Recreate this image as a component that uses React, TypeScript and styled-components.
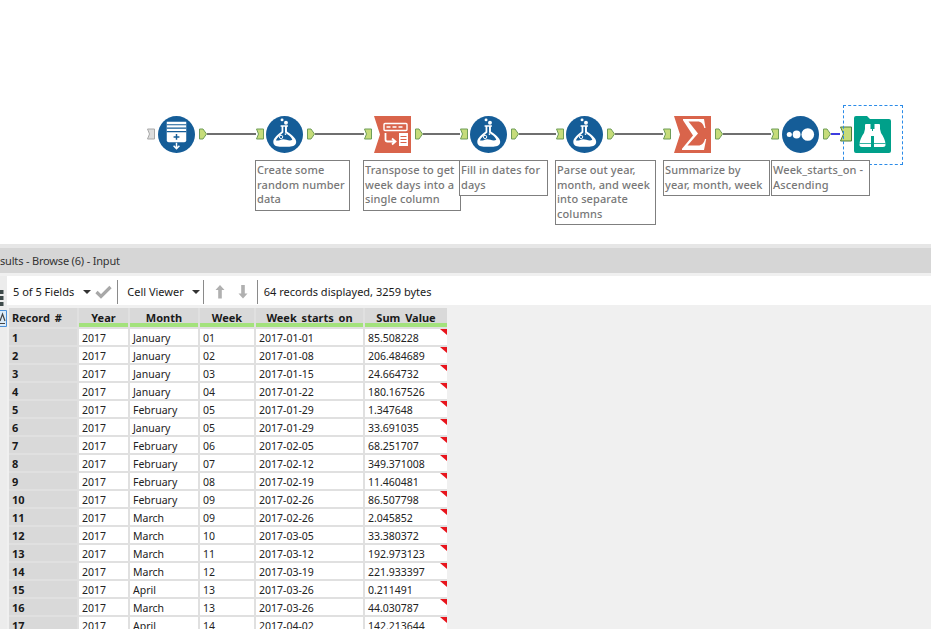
import React from "react";
import styled, { createGlobalStyle } from "styled-components";

const Global = createGlobalStyle`
  html, body { margin: 0; padding: 0; background: #fff; }
  body { font-family: "Noto Sans", "Open Sans", sans-serif; overflow: hidden; }
`;

const Page = styled.div`
  width: 931px;
  height: 629px;
  display: flex;
  flex-direction: column;
  overflow: hidden;
`;

const Canvas = styled.section`
  position: relative;
  height: 244px;
  flex: none;
  box-sizing: border-box;
  padding: 116px 0 0 147px;
  background: #fff;
`;

const FlowRow = styled.div`
  display: flex;
  align-items: flex-start;
  height: 37px;
`;

const NodeSvg = styled.svg<{ $gap?: number }>`
  display: block;
  flex: none;
  margin-left: ${(p) => p.$gap ?? 0}px;
`;

const AnchorSvg = styled.svg<{ $gap?: number; $top?: number }>`
  display: block;
  flex: none;
  margin-left: ${(p) => p.$gap ?? 0}px;
  margin-top: ${(p) => p.$top ?? 12}px;
`;

const Wire = styled.div<{ $w: number; $blue?: boolean }>`
  flex: none;
  margin-top: 17px;
  width: ${(p) => p.$w}px;
  height: 2px;
  background: ${(p) => (p.$blue ? "#3d3de0" : "#6f6f6f")};
`;

const Note = styled.div<{ $x: number; $w: number; $h: number }>`
  position: absolute;
  left: ${(p) => p.$x}px;
  top: 160px;
  width: ${(p) => p.$w}px;
  height: ${(p) => p.$h}px;
  box-sizing: border-box;
  border: 1px solid #7f7f7f;
  border-right-width: 1.5px;
  border-bottom-width: 1.5px;
  background: #fff;
  padding: 2px 1px 0 1px;
  font-size: 11px;
  font-weight: 500;
  line-height: 14.5px;
  letter-spacing: 0.1px;
  color: #777;
`;

const Selection = styled.div`
  position: absolute;
  left: 843px;
  top: 105px;
  width: 60px;
  height: 60px;
  box-sizing: border-box;
  border: 1px dashed #2b8be8;
`;

const Results = styled.section`
  flex: 1;
  min-height: 0;
  display: flex;
  flex-direction: column;
  background: #f0f0f0;
  border-top: 4px solid #e6e6e6;
`;

const TitleBar = styled.div`
  height: 25px;
  flex: none;
  background: #d6d6d6;
  display: flex;
  align-items: center;
  overflow: hidden;
`;

const Title = styled.span`
  font-size: 11px;
  letter-spacing: -0.18px;
  color: #333;
  white-space: nowrap;
`;

const Body = styled.div`
  flex: 1;
  min-height: 0;
  margin-top: 3px;
  display: flex;
`;

const SideStrip = styled.div`
  width: 7px;
  flex: none;
  background: #ececec;
  display: flex;
  flex-direction: column;
  align-items: flex-start;
  padding-top: 14px;
  gap: 4px;
`;

const Main = styled.div`
  flex: 1;
  min-width: 0;
  display: flex;
  flex-direction: column;
`;

const Toolbar = styled.div`
  height: 29px;
  flex: none;
  box-sizing: border-box;
  padding-top: 2px;
  background: #fff;
  display: flex;
  align-items: center;
  font-size: 11px;
  color: #1a1a1a;
  white-space: nowrap;
`;

const ToolText = styled.span<{ $left: number }>`
  margin-left: ${(p) => p.$left}px;
`;

const Caret = styled.span<{ $left: number }>`
  margin-left: ${(p) => p.$left}px;
  width: 0;
  height: 0;
  border-left: 4px solid transparent;
  border-right: 4px solid transparent;
  border-top: 4px solid #333;
`;

const Divider = styled.span<{ $left: number }>`
  margin-left: ${(p) => p.$left}px;
  width: 1px;
  height: 24px;
  background: #8a8a8a;
`;

const ToolIcon = styled.svg<{ $left: number }>`
  margin-left: ${(p) => p.$left}px;
  display: block;
  flex: none;
`;

const TableGrid = styled.div`
  margin: 3px 0 0 2px;
  display: grid;
  grid-template-columns: 68px 49px 68px 54px 107px 82px;
  grid-template-rows: 19px;
  grid-auto-rows: 16px;
  gap: 2px;
  width: max-content;
  background: #e0e0e0;
`;

const HeadCell = styled.div<{ $plain?: boolean }>`
  height: 19px;
  box-sizing: border-box;
  background: #d9d9d9;
  border-bottom: ${(p) => (p.$plain ? "0" : "4px solid #a3e27c")};
  font-size: 11px;
  font-weight: 700;
  color: #1a1a1a;
  line-height: 19px;
  word-spacing: 2px;
  padding-left: ${(p) => (p.$plain ? "3px" : "0")};
  text-align: ${(p) => (p.$plain ? "left" : "center")};
  white-space: nowrap;
`;

const RecordCell = styled.div`
  background: #d9d9d9;
  font-size: 11px;
  font-weight: 700;
  color: #1a1a1a;
  line-height: 17px;
  padding-left: 3px;
`;

const DataCell = styled.div<{ $flag?: boolean }>`
  position: relative;
  background: #fff;
  font-size: 10.5px;
  color: #222;
  line-height: 18px;
  padding-left: 3px;
  white-space: nowrap;
  overflow: hidden;
  &::after {
    content: "";
    display: ${(p) => (p.$flag ? "block" : "none")};
    position: absolute;
    top: 0;
    right: 0;
    border-top: 6px solid #e8141c;
    border-left: 7px solid transparent;
  }
`;

const rows: [string, string, string, string, string][] = [
  ["2017", "January", "01", "2017-01-01", "85.508228"],
  ["2017", "January", "02", "2017-01-08", "206.484689"],
  ["2017", "January", "03", "2017-01-15", "24.664732"],
  ["2017", "January", "04", "2017-01-22", "180.167526"],
  ["2017", "February", "05", "2017-01-29", "1.347648"],
  ["2017", "January", "05", "2017-01-29", "33.691035"],
  ["2017", "February", "06", "2017-02-05", "68.251707"],
  ["2017", "February", "07", "2017-02-12", "349.371008"],
  ["2017", "February", "08", "2017-02-19", "11.460481"],
  ["2017", "February", "09", "2017-02-26", "86.507798"],
  ["2017", "March", "09", "2017-02-26", "2.045852"],
  ["2017", "March", "10", "2017-03-05", "33.380372"],
  ["2017", "March", "11", "2017-03-12", "192.973123"],
  ["2017", "March", "12", "2017-03-19", "221.933397"],
  ["2017", "April", "13", "2017-03-26", "0.211491"],
  ["2017", "March", "13", "2017-03-26", "44.030787"],
  ["2017", "April", "14", "2017-04-02", "142.213644"],
];

const BLUE = "#155d98";
const RED = "#d9644b";
const TEAL = "#00a08a";

const Flask = ({ gap }: { gap: number }) => (
  <NodeSvg $gap={gap} width={37} height={37} viewBox="0 0 38 38">
    <circle cx="19" cy="19" r="19" fill={BLUE} />
    <circle cx="16.500" cy="4" r="1.500" fill="#fff" />
    <circle cx="20.500" cy="7" r="2" fill="#fff" />
    <g transform="translate(0 -1.500)">
      <path
        d="M15 11h7.500v1.500h-1v5C25 20 31 24 31 28c0 3.500-3 5-7 5H14c-4 0-6.500-1.500-6.500-5 0-4 5.500-8 8.500-10.500v-5h-1z"
        fill="#fff"
      />
      <path
        d="M17.800 12.500h1.700v6c3 2.200 6.800 4.500 7.500 7.500-2 1-4 .5-6-.2-3-1-5-.5-7 .5-1.500.6-2.800.6-3.800.2 1-3 5-5.500 7.600-8z"
        fill={BLUE}
      />
      <circle cx="15.500" cy="23" r="1.700" fill="none" stroke="#fff" strokeWidth="1" />
      <circle cx="20" cy="20" r=".9" fill="#fff" />
    </g>
  </NodeSvg>
);

const Output = ({ gap }: { gap: number }) => (
  <AnchorSvg $gap={gap} width={8} height={12} viewBox="0 0 8 12">
    <path d="M.5 1h3.500L7.500 6 4 11H.5z" fill="#c6dc7a" stroke="#6f9d58" strokeWidth="1" />
  </AnchorSvg>
);

const Input = ({ grey }: { grey?: boolean }) => (
  <AnchorSvg width={8} height={12} viewBox="0 0 8 12">
    <path
      d="M.5 1h7v10h-7L2.500 6z"
      fill={grey ? "#dcdcdc" : "#c6dc7a"}
      stroke={grey ? "#a8a8a8" : "#6f9d58"}
      strokeWidth="1"
    />
  </AnchorSvg>
);

const RedShape = "M0 0h37v37H0l6-18.500z";

export default function App() {
  return (
    <Page>
      <Global />
      <Canvas>
        <FlowRow>
          <Input grey />
          <NodeSvg $gap={3} width={37} height={37} viewBox="0 0 38 38">
            <circle cx="19" cy="19" r="19" fill={BLUE} />
            <path d="M9 6h20v19a2 2 0 0 1-2 2H11a2 2 0 0 1-2-2z" fill="#fff" />
            <path d="M9 9h20M9 12.500h20M9 16h20" stroke={BLUE} strokeWidth="1.200" />
            <path d="M19 18.500v6M16 21.500h6" stroke={BLUE} strokeWidth="1.500" />
            <path d="M19 27.500v6M16 30.500l3 3 3-3" stroke="#fff" strokeWidth="1.500" fill="none" />
          </NodeSvg>
          <Output gap={4} />
          <Wire $w={49} />

          <Input />
          <Flask gap={2} />
          <Output gap={4} />
          <Wire $w={49} />

          <Input />
          <NodeSvg $gap={2} width={37} height={37} viewBox="0 0 37 37">
            <path d={RedShape} fill={RED} />
            <rect x="10" y="7.500" width="23" height="7" rx="1" fill="none" stroke="#fff" strokeWidth="1.400" />
            <path d="M12.500 11h4M18.500 11h4M24.500 11h4" stroke="#fff" strokeWidth="1.600" />
            <path d="M11.500 17v6.500a2 2 0 0 0 2 2h7M18 22.500l3.500 3-3.500 3" stroke="#fff" strokeWidth="1.800" fill="none" />
            <rect x="25" y="17" width="9" height="13" fill="#fff" />
            <path d="M26.500 20.500h6M26.500 23.500h6M26.500 26.500h6" stroke={RED} strokeWidth="1.200" />
          </NodeSvg>
          <Output gap={4} />
          <Wire $w={37} />

          <Input />
          <Flask gap={2} />
          <Output gap={4} />
          <Wire $w={37} />

          <Input />
          <Flask gap={2} />
          <Output gap={4} />
          <Wire $w={48} />

          <Input />
          <NodeSvg $gap={3} width={37} height={37} viewBox="0 0 37 37">
            <path d={RedShape} fill={RED} />
            <path
              d="M9 3h21l1.500 9h-1.200c-1-4-2.800-6.500-7-6.500H14.500l9.500 12-10.500 12H24c4 0 6-2.500 7-6.500h1.200L30 34H8v-1.200L19 19.500 9 4.200z"
              fill="#fff"
            />
          </NodeSvg>
          <Output gap={4} />
          <Wire $w={48} />

          <Input />
          <NodeSvg $gap={3} width={37} height={37} viewBox="0 0 38 38">
            <circle cx="19" cy="19" r="19" fill={BLUE} />
            <circle cx="7.500" cy="19" r="2.600" fill="#fff" />
            <circle cx="15" cy="19" r="4" fill="#fff" />
            <circle cx="26.500" cy="19" r="6.500" fill="#fff" />
          </NodeSvg>
          <Output gap={4} />
          <Wire $w={9} $blue />

          <AnchorSvg $top={10} width={12} height={16} viewBox="0 0 12 16">
            <path d="M.5 1h11v14H.5L3.500 8z" fill="#c6dc7a" stroke="#4f7d3c" strokeWidth="1" />
          </AnchorSvg>
          <NodeSvg $gap={2} width={37} height={37} viewBox="0 0 37 37">
            <path d="M2 0h11l3 3h19a2 2 0 0 1 2 2v30a2 2 0 0 1-2 2H2a2 2 0 0 1-2-2V2a2 2 0 0 1 2-2z" fill={TEAL} />
            <path
              d="M11.500 8h5v5H18v6h-1v12H8c-1.500 0-2.500-.8-2.500-2 0-5 2-8 4.500-12l1-4V9zM25.500 8h-5v5H19v6h1v12h9c1.500 0 2.500-.8 2.500-2 0-5-2-8-4.500-12l-1-4V9z"
              fill="#fff"
            />
            <path d="M5.500 27.500h11.500M20 27.500h11.500" stroke={TEAL} strokeWidth=".8" />
            <path d="M17 15h3v5h-3z" fill="#fff" />
          </NodeSvg>
        </FlowRow>
        <Selection />

        <Note $x={255} $w={95} $h={51}>Create some<br />random number<br />data</Note>
        <Note $x={363} $w={98} $h={51}>Transpose to get<br />week days into a<br />single column</Note>
        <Note $x={459} $w={89} $h={36}>Fill in dates for<br />days</Note>
        <Note $x={555} $w={101} $h={65}>Parse out year,<br />month, and week<br />into separate<br />columns</Note>
        <Note $x={663} $w={107} $h={36}>Summarize by<br />year, month, week</Note>
        <Note $x={771} $w={99} $h={36}>Week_starts_on -<br />Ascending</Note>
      </Canvas>

      <Results>
        <TitleBar>
          <Title>sults - Browse (6) - Input</Title>
        </TitleBar>
        <Body>
          <SideStrip>
            <svg width="4" height="16" viewBox="0 0 4 16">
              <path d="M0 0h3.500v4H0zM0 6h3.500v4H0zM0 12h3.500v4H0z" fill="#3e4a4a" />
            </svg>
            <svg width="7" height="17" viewBox="0 0 7 17">
              <path d="M0 .5h6.500v16H0" fill="#dcebf8" stroke="#4a90d9" />
              <path d="M0 11l2.500-7 2.500 7M0 13.500h5" stroke="#444" strokeWidth="1.200" fill="none" />
            </svg>
          </SideStrip>
          <Main>
            <Toolbar>
              <ToolText $left={6}>5 of 5 Fields</ToolText>
              <Caret $left={9} />
              <ToolIcon $left={4} width="17" height="14" viewBox="0 0 17 14">
                <path d="M1.500 7l4.500 4.500L15.500 2" fill="none" stroke="#a8a8a8" strokeWidth="3.200" />
              </ToolIcon>
              <Divider $left={5} />
              <ToolText $left={9}>Cell Viewer</ToolText>
              <Caret $left={8} />
              <Divider $left={3} />
              <ToolIcon $left={11} width="10" height="15" viewBox="0 0 10 15">
                <path d="M5 1L9.500 6H6.800v8.500H3.200V6H.5z" fill="#b0b0b0" />
              </ToolIcon>
              <ToolIcon $left={13} width="10" height="15" viewBox="0 0 10 15">
                <path d="M5 14.500L9.500 9.500H6.800V1H3.200v8.500H.5z" fill="#b0b0b0" />
              </ToolIcon>
              <Divider $left={9} />
              <ToolText $left={6}>64 records displayed, 3259 bytes</ToolText>
            </Toolbar>
            <TableGrid>
              <HeadCell $plain>Record #</HeadCell>
              <HeadCell>Year</HeadCell>
              <HeadCell>Month</HeadCell>
              <HeadCell>Week</HeadCell>
              <HeadCell>Week starts on</HeadCell>
              <HeadCell>Sum Value</HeadCell>
              {rows.map((r, i) => (
                <React.Fragment key={i}>
                  <RecordCell>{i + 1}</RecordCell>
                  {r.map((c, j) => (
                    <DataCell key={j} $flag={j === 4}>{c}</DataCell>
                  ))}
                </React.Fragment>
              ))}
            </TableGrid>
          </Main>
        </Body>
      </Results>
    </Page>
  );
}
